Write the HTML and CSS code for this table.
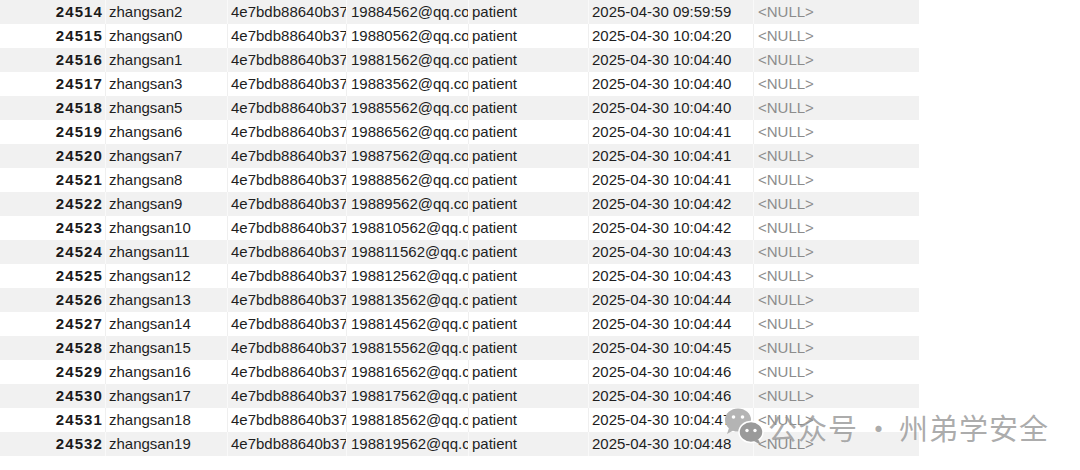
FILE: index.html
```html
<!DOCTYPE html>
<html>
<head>
<meta charset="utf-8">
<link rel="stylesheet" href="styles.css">
</head>
<body>
<div class="grid">
  <div class="row"><div class="c id">24514</div><div class="c">zhangsan2</div><div class="c">4e7bdb88640b37b3</div><div class="c mail">19884562@qq.com</div><div class="c">patient</div><div class="c">2025-04-30 09:59:59</div><div class="c null">&lt;NULL&gt;</div></div>
  <div class="row"><div class="c id">24515</div><div class="c">zhangsan0</div><div class="c">4e7bdb88640b37b3</div><div class="c mail">19880562@qq.com</div><div class="c">patient</div><div class="c">2025-04-30 10:04:20</div><div class="c null">&lt;NULL&gt;</div></div>
  <div class="row"><div class="c id">24516</div><div class="c">zhangsan1</div><div class="c">4e7bdb88640b37b3</div><div class="c mail">19881562@qq.com</div><div class="c">patient</div><div class="c">2025-04-30 10:04:40</div><div class="c null">&lt;NULL&gt;</div></div>
  <div class="row"><div class="c id">24517</div><div class="c">zhangsan3</div><div class="c">4e7bdb88640b37b3</div><div class="c mail">19883562@qq.com</div><div class="c">patient</div><div class="c">2025-04-30 10:04:40</div><div class="c null">&lt;NULL&gt;</div></div>
  <div class="row"><div class="c id">24518</div><div class="c">zhangsan5</div><div class="c">4e7bdb88640b37b3</div><div class="c mail">19885562@qq.com</div><div class="c">patient</div><div class="c">2025-04-30 10:04:40</div><div class="c null">&lt;NULL&gt;</div></div>
  <div class="row"><div class="c id">24519</div><div class="c">zhangsan6</div><div class="c">4e7bdb88640b37b3</div><div class="c mail">19886562@qq.com</div><div class="c">patient</div><div class="c">2025-04-30 10:04:41</div><div class="c null">&lt;NULL&gt;</div></div>
  <div class="row"><div class="c id">24520</div><div class="c">zhangsan7</div><div class="c">4e7bdb88640b37b3</div><div class="c mail">19887562@qq.com</div><div class="c">patient</div><div class="c">2025-04-30 10:04:41</div><div class="c null">&lt;NULL&gt;</div></div>
  <div class="row"><div class="c id">24521</div><div class="c">zhangsan8</div><div class="c">4e7bdb88640b37b3</div><div class="c mail">19888562@qq.com</div><div class="c">patient</div><div class="c">2025-04-30 10:04:41</div><div class="c null">&lt;NULL&gt;</div></div>
  <div class="row"><div class="c id">24522</div><div class="c">zhangsan9</div><div class="c">4e7bdb88640b37b3</div><div class="c mail">19889562@qq.com</div><div class="c">patient</div><div class="c">2025-04-30 10:04:42</div><div class="c null">&lt;NULL&gt;</div></div>
  <div class="row"><div class="c id">24523</div><div class="c">zhangsan10</div><div class="c">4e7bdb88640b37b3</div><div class="c mail">198810562@qq.com</div><div class="c">patient</div><div class="c">2025-04-30 10:04:42</div><div class="c null">&lt;NULL&gt;</div></div>
  <div class="row"><div class="c id">24524</div><div class="c">zhangsan11</div><div class="c">4e7bdb88640b37b3</div><div class="c mail">198811562@qq.com</div><div class="c">patient</div><div class="c">2025-04-30 10:04:43</div><div class="c null">&lt;NULL&gt;</div></div>
  <div class="row"><div class="c id">24525</div><div class="c">zhangsan12</div><div class="c">4e7bdb88640b37b3</div><div class="c mail">198812562@qq.com</div><div class="c">patient</div><div class="c">2025-04-30 10:04:43</div><div class="c null">&lt;NULL&gt;</div></div>
  <div class="row"><div class="c id">24526</div><div class="c">zhangsan13</div><div class="c">4e7bdb88640b37b3</div><div class="c mail">198813562@qq.com</div><div class="c">patient</div><div class="c">2025-04-30 10:04:44</div><div class="c null">&lt;NULL&gt;</div></div>
  <div class="row"><div class="c id">24527</div><div class="c">zhangsan14</div><div class="c">4e7bdb88640b37b3</div><div class="c mail">198814562@qq.com</div><div class="c">patient</div><div class="c">2025-04-30 10:04:44</div><div class="c null">&lt;NULL&gt;</div></div>
  <div class="row"><div class="c id">24528</div><div class="c">zhangsan15</div><div class="c">4e7bdb88640b37b3</div><div class="c mail">198815562@qq.com</div><div class="c">patient</div><div class="c">2025-04-30 10:04:45</div><div class="c null">&lt;NULL&gt;</div></div>
  <div class="row"><div class="c id">24529</div><div class="c">zhangsan16</div><div class="c">4e7bdb88640b37b3</div><div class="c mail">198816562@qq.com</div><div class="c">patient</div><div class="c">2025-04-30 10:04:46</div><div class="c null">&lt;NULL&gt;</div></div>
  <div class="row"><div class="c id">24530</div><div class="c">zhangsan17</div><div class="c">4e7bdb88640b37b3</div><div class="c mail">198817562@qq.com</div><div class="c">patient</div><div class="c">2025-04-30 10:04:46</div><div class="c null">&lt;NULL&gt;</div></div>
  <div class="row"><div class="c id">24531</div><div class="c">zhangsan18</div><div class="c">4e7bdb88640b37b3</div><div class="c mail">198818562@qq.com</div><div class="c">patient</div><div class="c">2025-04-30 10:04:47</div><div class="c null">&lt;NULL&gt;</div></div>
  <div class="row"><div class="c id">24532</div><div class="c">zhangsan19</div><div class="c">4e7bdb88640b37b3</div><div class="c mail">198819562@qq.com</div><div class="c">patient</div><div class="c">2025-04-30 10:04:48</div><div class="c null">&lt;NULL&gt;</div></div>
</div>
<div class="watermark">
  <svg class="wx" width="42" height="40" viewBox="0 0 42 40">
    <ellipse cx="14" cy="13" rx="13" ry="11.5" fill="#b4b4b4"/>
    <path d="M5 21 L3 27 L10 23 Z" fill="#b4b4b4"/>
    <circle cx="9.5" cy="10" r="1.8" fill="#fff"/>
    <circle cx="18.5" cy="10" r="1.8" fill="#fff"/>
    <ellipse cx="27" cy="25" rx="12" ry="10.5" fill="#9a9a9a" stroke="#fff" stroke-width="1.5"/>
    <path d="M34 32 L37 38 L30 34 Z" fill="#9a9a9a"/>
    <circle cx="23" cy="23.5" r="1.7" fill="#fff"/>
    <circle cx="31" cy="23.5" r="1.7" fill="#fff"/>
  </svg>
  <span class="wm-text">公众号<span class="wm-dot">·</span>州弟学安全</span>
</div>
</body>
</html>
```
FILE: styles.css
```css
html, body {
  margin: 0;
  padding: 0;
  background: #ffffff;
}
body {
  position: relative;
  width: 1080px;
  height: 470px;
  overflow: hidden;
  font-family: "Liberation Sans", Arial, sans-serif;
  font-size: 15px;
  color: #1e1e1e;
}
.grid {
  width: 919px;
  display: flex;
  flex-direction: column;
}
.row {
  display: grid;
  grid-template-columns: 106px 122px 119px 122px 120px 165px 165px;
  height: 24px;
  background: #ffffff;
}
.row:nth-child(odd) {
  background: #f1f1f1;
}
.c {
  line-height: 24px;
  height: 24px;
  padding-left: 3px;
  white-space: nowrap;
  overflow: hidden;
  border-right: 1px solid #f9f9f9;
  box-sizing: border-box;
}
.row:nth-child(even) .c {
  border-right-color: #efefef;
}
.c.mail {
  padding-left: 4px;
  padding-right: 2px;
}
.c.id {
  text-align: right;
  padding-left: 0;
  padding-right: 2px;
  font-weight: bold;
  color: #1a1a1a;
  letter-spacing: 1.1px;
}
.c.null {
  color: #8c8c8c;
  padding-left: 4px;
  border-right: none;
}
.watermark {
  position: absolute;
  left: 724px;
  top: 407px;
  display: flex;
  align-items: center;
  gap: 2px;
}
.wm-text {
  font-family: "Noto Sans CJK SC", sans-serif;
  font-weight: 400;
  font-size: 29px;
  letter-spacing: 1px;
  color: rgba(150, 150, 150, 0.8);
  line-height: 40px;
}
.wm-dot {
  margin: 0 5px 0 6px;
}
```
